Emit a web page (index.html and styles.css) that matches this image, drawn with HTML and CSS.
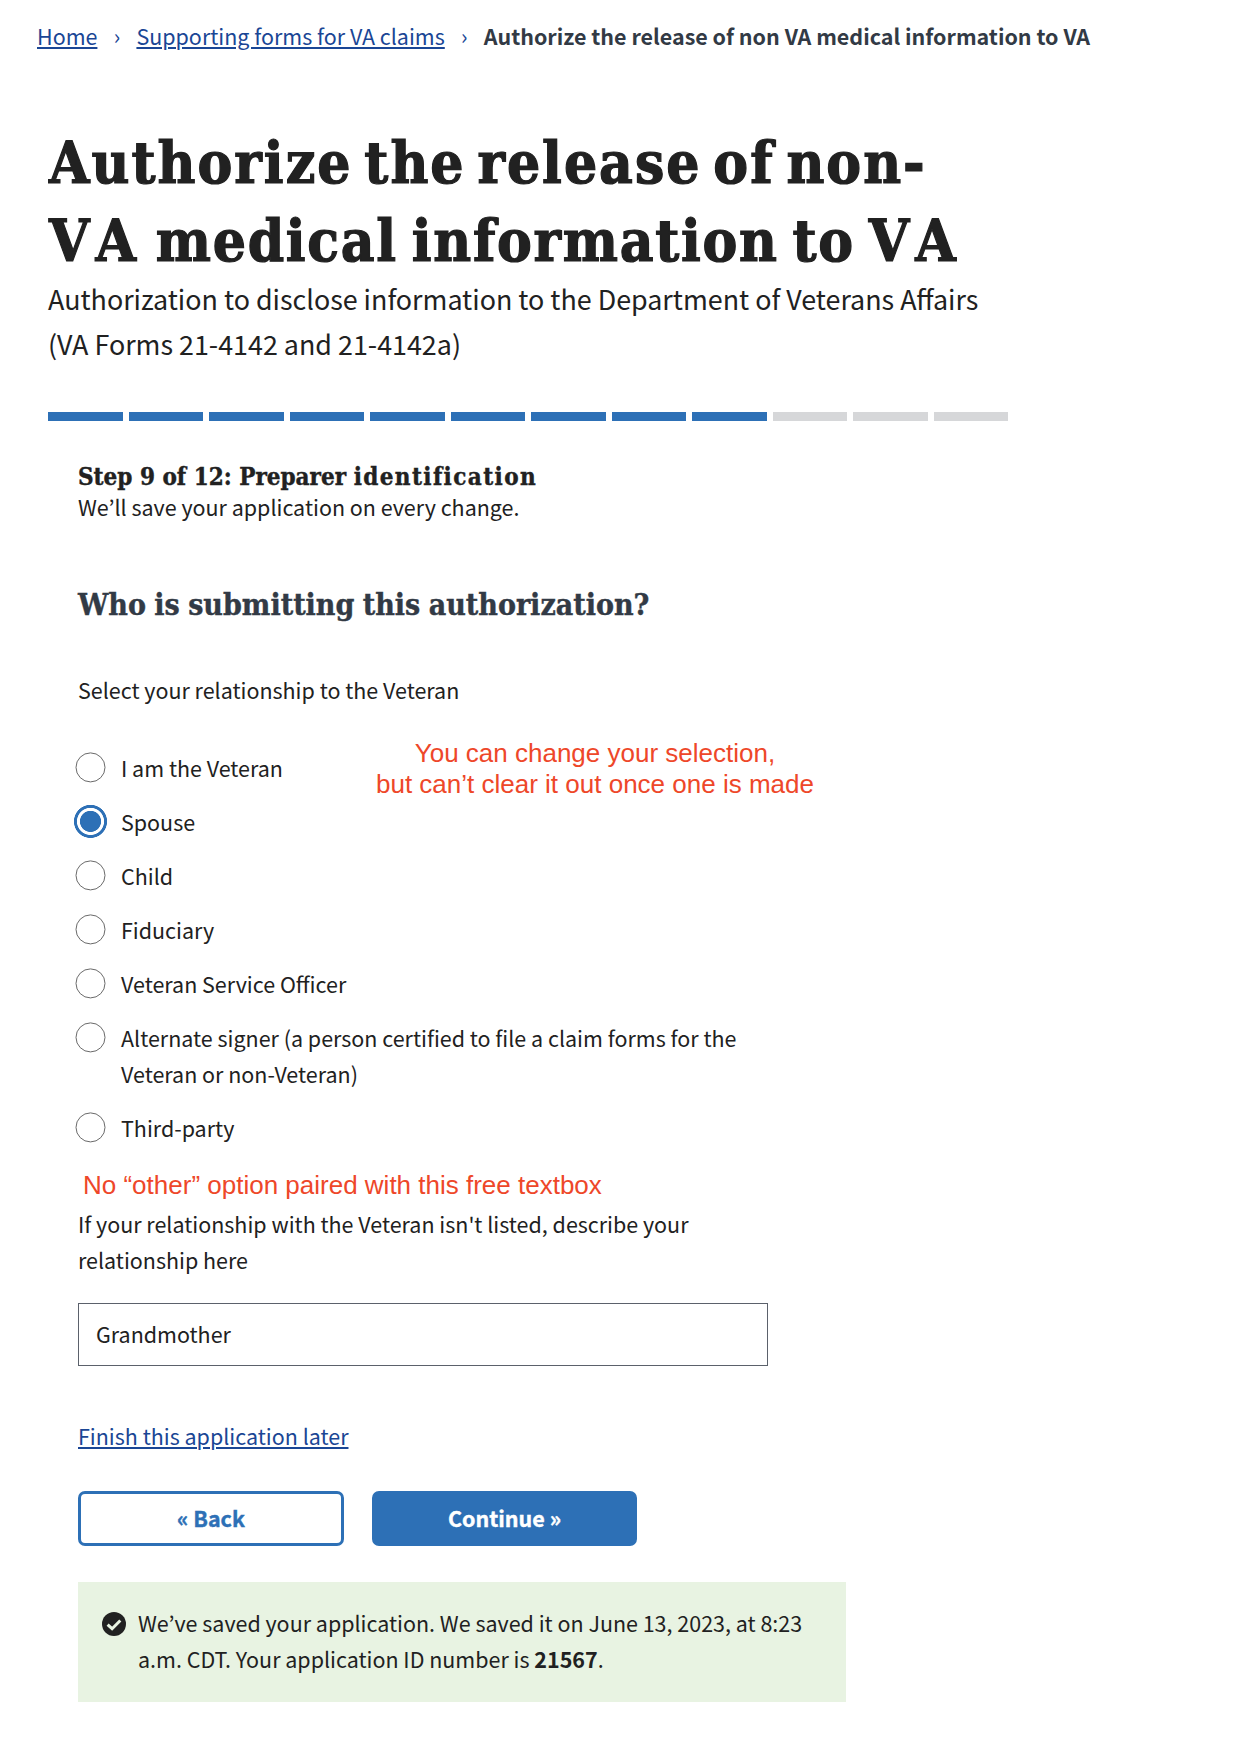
FILE: index.html
```html
<!DOCTYPE html>
<html lang="en">
<head>
<meta charset="utf-8">
<title>Authorize the release of non-VA medical information to VA</title>
<link rel="stylesheet" href="styles.css">
</head>
<body>
<nav class="breadcrumbs">
  <a class="link" href="#">Home</a><span class="sep">›</span><a class="link" href="#">Supporting forms for VA claims</a><span class="sep">›</span><span class="current">Authorize the release of non VA medical information to VA</span>
</nav>
<main class="main">
  <h1 class="title"><span class="title-a">Authorize the release of non-</span><br><span class="title-b"><span class="va">VA</span> medical information to <span class="va">VA</span></span></h1>
  <p class="subtitle">Authorization to disclose information to the Department of Veterans Affairs<br>(VA Forms 21-4142 and 21-4142a)</p>
  <div class="progress">
    <span class="seg done"></span><span class="seg done"></span><span class="seg done"></span><span class="seg done"></span><span class="seg done"></span><span class="seg done"></span><span class="seg done"></span><span class="seg done"></span><span class="seg done"></span><span class="seg"></span><span class="seg"></span><span class="seg"></span>
  </div>
  <form class="form">
    <h2 class="step">Step 9 of 12: Preparer <span class="step-name">identification</span></h2>
    <p class="text">We’ll save your application on every change.</p>
    <h3 class="question">Who is submitting this authorization?</h3>
    <p class="text">Select your relationship to the Veteran</p>
    <div class="options">
      <label class="option"><input class="radio" type="radio" name="rel"><span>I am the Veteran</span></label>
      <label class="option"><input class="radio" type="radio" name="rel" checked><span>Spouse</span></label>
      <label class="option"><input class="radio" type="radio" name="rel"><span>Child</span></label>
      <label class="option"><input class="radio" type="radio" name="rel"><span>Fiduciary</span></label>
      <label class="option"><input class="radio" type="radio" name="rel"><span>Veteran Service Officer</span></label>
      <label class="option"><input class="radio" type="radio" name="rel"><span>Alternate signer (a person certified to file a claim forms for the<br>Veteran or non-Veteran)</span></label>
      <label class="option"><input class="radio" type="radio" name="rel"><span>Third-party</span></label>
      <p class="note note-selection">You can change your selection,<br>but can’t clear it out once one is made</p>
      <p class="note note-other">No “other” option paired with this free textbox</p>
    </div>
    <label class="text other-label" for="other">If your relationship with the Veteran isn't listed, describe your<br>relationship here</label>
    <input class="field" id="other" type="text" value="Grandmother">
    <p class="text finish"><a class="link" href="#">Finish this application later</a></p>
    <div class="buttons">
      <button class="btn btn-back" type="button">« Back</button>
      <button class="btn btn-next" type="button">Continue »</button>
    </div>
    <div class="alert">
      <svg class="check" viewBox="0 0 24 24" width="24" height="24"><circle cx="12" cy="12" r="12" fill="#212121"/><path d="M5.6 12.6l4.5 4.1 8.2-8.2" fill="none" stroke="#e8f3e2" stroke-width="3"/></svg>
      <p class="text">We’ve saved your application. We saved it on June 13, 2023, at 8:23<br>a.m. CDT. Your application ID number is <strong>21567</strong>.</p>
    </div>
  </form>
</main>
</body>
</html>
```
FILE: styles.css
```css
* { box-sizing: border-box; }

body {
  margin: 0;
  min-height: 1742px;
  background: #fff;
  color: #212121;
  font-family: "Noto Sans CJK KR", "Noto Sans", sans-serif;
  font-size: 21.485px;
  line-height: 36px;
}

h1, h2, h3, p { margin: 0; }

.link {
  color: #1a4695;
  text-decoration: underline;
  text-decoration-thickness: 2px;
  text-underline-offset: 2px;
}

.breadcrumbs {
  display: flex;
  padding: 18px 0 0 37px;
  white-space: nowrap;
}
.sep { width: 39px; text-align: center; color: #1a4695; }
.current { font-weight: 700; color: #323a45; }

.main { padding: 70px 0 0 48px; }

.title, .step, .question {
  font-family: "DejaVu Serif Condensed", "DejaVu Serif", serif;
  font-stretch: condensed;
  font-weight: 700;
  white-space: nowrap;
}
.title {
  padding-left: 1px;
  font-size: 58px;
  line-height: 78px;
  font-kerning: none;
  -webkit-text-stroke: 1.2px currentColor;
}
.title-a { letter-spacing: 2px; word-spacing: -8.3px; }
.title-b { letter-spacing: 1.7px; word-spacing: -6px; }
.va { letter-spacing: 6px; }
.subtitle {
  margin-top: -4px;
  font-size: 26.86px;
  line-height: 45px;
  white-space: nowrap;
}

.progress {
  display: flex;
  gap: 6px;
  width: 960px;
  height: 9px;
  margin-top: 46px;
}
.seg { flex: 1; background: #d6d7d9; }
.seg.done { background: #2d70b6; }

.form { width: 798px; padding: 44px 0 0 30px; }
.text { display: block; white-space: nowrap; }
.step {
  font-size: 24px;
  line-height: 24px;
  -webkit-text-stroke: 0.4px currentColor;
}
.step-name { letter-spacing: 1.4px; }
.question {
  margin: 60px 0 47px;
  font-size: 30px;
  line-height: 40px;
  color: #323a45;
  word-spacing: -1px;
  -webkit-text-stroke: 0.4px currentColor;
}

.options {
  position: relative;
  display: flex;
  flex-direction: column;
  gap: 18px;
  margin-top: 42px;
}
.option { display: flex; gap: 16px; white-space: nowrap; }
.radio {
  appearance: none;
  flex: none;
  width: 30px;
  height: 30px;
  margin: 2px 0 0 -3px;
  border: 1px solid #6a6a6a;
  border-radius: 50%;
  background: #fff;
  transform: translate(0.5px, 0.4px);
}
.radio:checked {
  width: 34px;
  height: 34px;
  margin: 0 -2px 0 -5px;
  border: 0;
  background: radial-gradient(circle, #2d70b6 10.2px, #fff 10.9px, #fff 13.2px, #2d70b6 13.9px, #2d70b6 16.2px, transparent 16.9px);
}

.note {
  position: absolute;
  font-family: "Liberation Sans", Arial, sans-serif;
  font-size: 26px;
  line-height: 31px;
  color: #ee4729;
  text-align: center;
  white-space: nowrap;
}
.note-selection { left: 298px; top: -12px; }
.note-other { left: 5px; top: 420px; }

.other-label { margin-top: 60px; }
.field {
  display: block;
  width: 690px;
  height: 63px;
  margin-top: 25px;
  padding: 0 17px 2px;
  border: 1px solid #5b616b;
  border-radius: 0;
  background: #fff;
  color: inherit;
  font: inherit;
}
.finish { margin-top: 52px; }

.buttons { display: flex; gap: 28px; margin-top: 37px; }
.btn {
  width: 266px;
  height: 55px;
  padding: 0 0 2px;
  border: 3px solid #2d70b6;
  border-radius: 7px;
  background: #fff;
  color: #2d70b6;
  font: inherit;
  font-weight: 700;
  -webkit-text-stroke: 0.4px currentColor;
}
.btn-next { width: 265px; background: #2d70b6; color: #fff; }

.alert {
  display: flex;
  gap: 12px;
  width: 768px;
  height: 120px;
  margin-top: 36px;
  padding: 23px 24px;
  background: #e8f3e2;
}
.check { flex: none; margin-top: 7px; }
```
